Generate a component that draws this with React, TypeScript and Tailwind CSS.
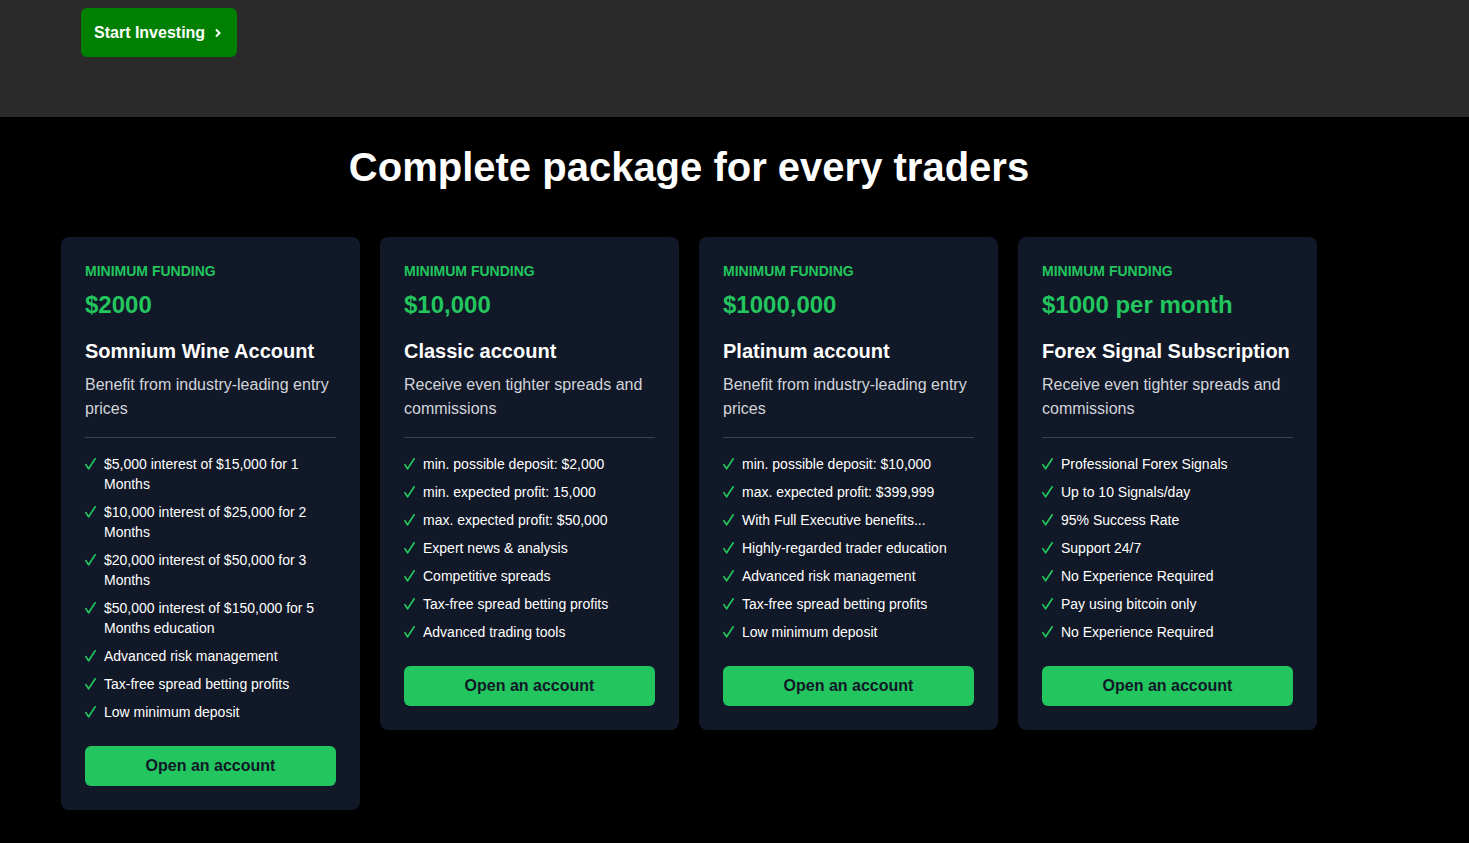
import React from "react";

type Plan = {
  price: string;
  title: string;
  desc: string;
  items: string[];
};

const plans: Plan[] = [
  {
    price: "$2000",
    title: "Somnium Wine Account",
    desc: "Benefit from industry-leading entry prices",
    items: [
      "$5,000 interest of $15,000 for 1 Months",
      "$10,000 interest of $25,000 for 2 Months",
      "$20,000 interest of $50,000 for 3 Months",
      "$50,000 interest of $150,000 for 5 Months education",
      "Advanced risk management",
      "Tax-free spread betting profits",
      "Low minimum deposit",
    ],
  },
  {
    price: "$10,000",
    title: "Classic account",
    desc: "Receive even tighter spreads and commissions",
    items: [
      "min. possible deposit: $2,000",
      "min. expected profit: 15,000",
      "max. expected profit: $50,000",
      "Expert news & analysis",
      "Competitive spreads",
      "Tax-free spread betting profits",
      "Advanced trading tools",
    ],
  },
  {
    price: "$1000,000",
    title: "Platinum account",
    desc: "Benefit from industry-leading entry prices",
    items: [
      "min. possible deposit: $10,000",
      "max. expected profit: $399,999",
      "With Full Executive benefits...",
      "Highly-regarded trader education",
      "Advanced risk management",
      "Tax-free spread betting profits",
      "Low minimum deposit",
    ],
  },
  {
    price: "$1000 per month",
    title: "Forex Signal Subscription",
    desc: "Receive even tighter spreads and commissions",
    items: [
      "Professional Forex Signals",
      "Up to 10 Signals/day",
      "95% Success Rate",
      "Support 24/7",
      "No Experience Required",
      "Pay using bitcoin only",
      "No Experience Required",
    ],
  },
];

function Check() {
  return (
    <svg
      width="11"
      height="12"
      viewBox="0 0 11 12"
      fill="none"
      className="mt-[4px] shrink-0"
    >
      <path
        d="M0.8 6.6 L3.6 10.8 L10.2 0.8"
        stroke="#22c55e"
        strokeWidth="1.7"
        strokeLinecap="round"
        strokeLinejoin="round"
      />
    </svg>
  );
}

function Card({ plan }: { plan: Plan }) {
  return (
    <div className="w-[299px] rounded-lg bg-[#111827] p-6">
      <div className="text-sm font-bold uppercase leading-5 text-[#22c55e]">Minimum Funding</div>
      <div className="mt-2 text-2xl font-bold leading-8 text-[#22c55e]">{plan.price}</div>
      <div className="mt-4 text-xl font-bold leading-7 text-white">{plan.title}</div>
      <p className="mt-2 text-base leading-6 text-[#d1d5db]">{plan.desc}</p>
      <div className="mt-4 h-px bg-[#374151]" />
      <ul className="mt-4 flex flex-col gap-2">
        {plan.items.map((it, i) => (
          <li key={i} className="flex gap-2 text-sm leading-5 text-white">
            <Check />
            <span>{it}</span>
          </li>
        ))}
      </ul>
      <button className="mt-6 flex h-10 w-full items-center justify-center rounded-md bg-[#22c55e] text-base font-bold text-[#111827]">
        Open an account
      </button>
    </div>
  );
}

export default function App() {
  return (
    <div
      className="min-h-[843px] bg-black"
      style={{ fontFamily: '"Liberation Sans", Arial, sans-serif' }}
    >
      <div className="h-[117px] bg-[#2a2a2a] pl-[81px] pt-2">
        <button className="flex h-[49px] w-[156px] items-center gap-[9px] rounded-md bg-[#008000] pl-[13px] text-base font-bold text-white">
          Start Investing
          <svg width="8" height="10" viewBox="0 0 8 10" fill="none">
            <path d="M2 1.5 L5.5 5 L2 8.5" stroke="white" strokeWidth="2" />
          </svg>
        </button>
      </div>
      <div className="ml-[61px] w-[1256px] pt-[26px] pb-8">
        <h2 className="text-center text-[40px] font-bold leading-[48px] text-white">
          Complete package for every traders
        </h2>
        <div className="mt-[46px] flex items-start gap-5">
          {plans.map((p, i) => (
            <Card key={i} plan={p} />
          ))}
        </div>
      </div>
    </div>
  );
}
